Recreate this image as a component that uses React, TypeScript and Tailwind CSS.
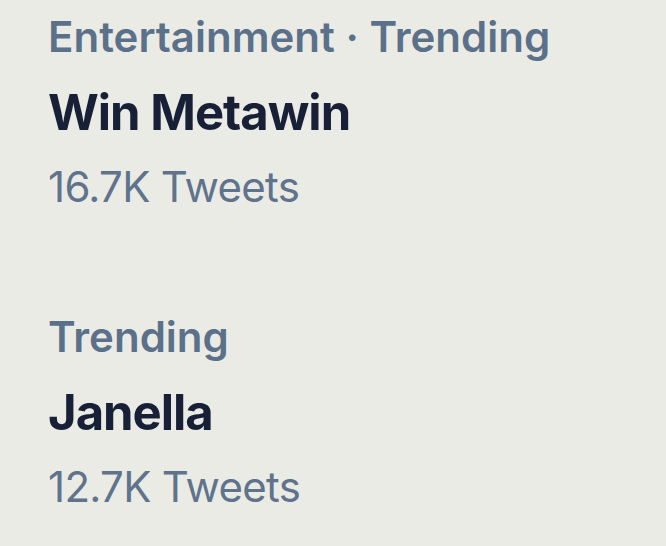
const trends = [
  { category: "Entertainment · Trending", name: "Win Metawin", count: "16.7K Tweets" },
  { category: "Trending", name: "Janella", count: "12.7K Tweets" },
];

export default function App() {
  return (
    <div className="w-[666px] h-[546px] bg-[#ebebe5] pl-[48px] pt-[12px] font-['Inter',sans-serif] overflow-hidden flex flex-col gap-[100px]">
      {trends.map((t) => (
        <div key={t.name} className="flex flex-col">
          <div className="text-[42px] leading-[50px] font-semibold text-[#5b7089]">{t.category}</div>
          <div className="mt-[21px] text-[49px] leading-[60px] font-bold tracking-[-1px] text-[#172036]">{t.name}</div>
          <div className="mt-[19px] text-[42px] leading-[50px] tracking-[-0.7px] text-[#5f738c]">{t.count}</div>
        </div>
      ))}
    </div>
  );
}
